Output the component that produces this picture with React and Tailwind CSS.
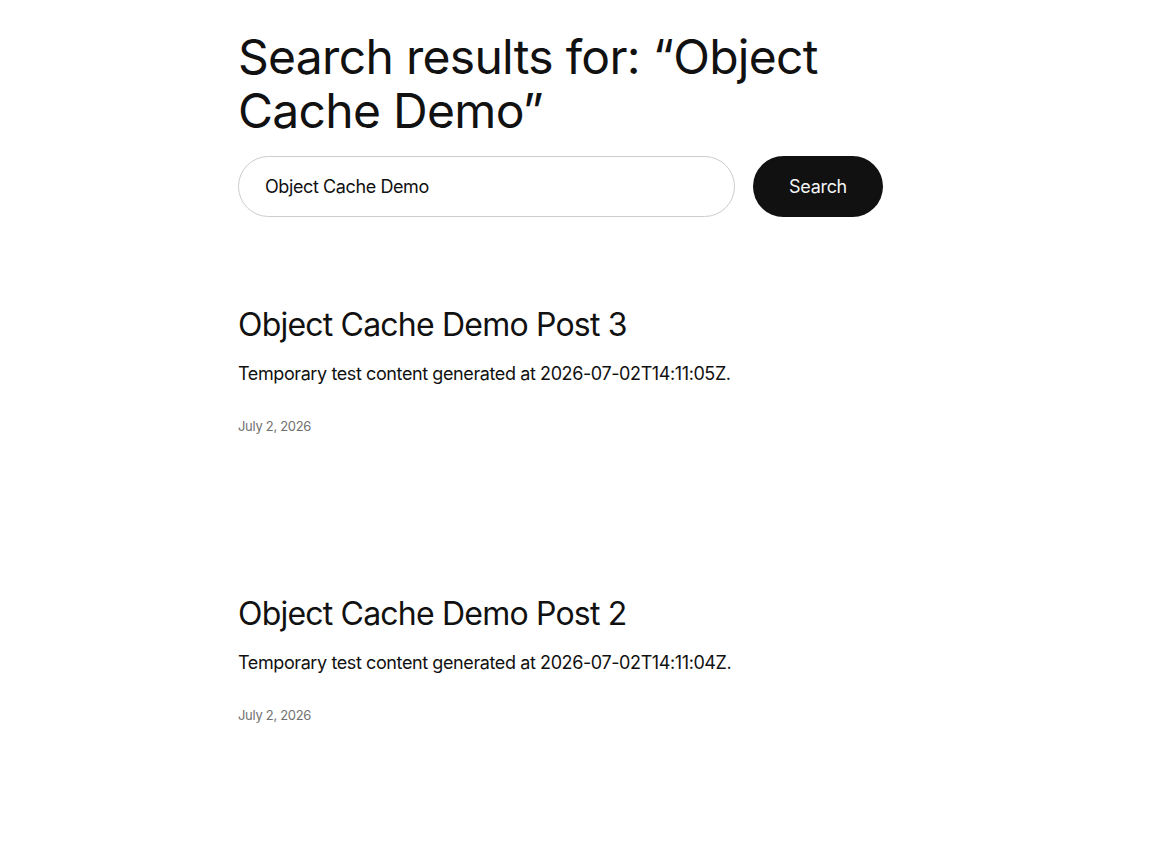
export default function App() {
  const posts = [
    { title: 'Object Cache Demo Post 3', stamp: '2026-07-02T14:11:05Z', date: 'July 2, 2026' },
    { title: 'Object Cache Demo Post 2', stamp: '2026-07-02T14:11:04Z', date: 'July 2, 2026' },
  ]

  return (
    <div className="min-h-screen bg-white text-[#111111]" style={{ fontFamily: 'Inter, "Noto Sans", sans-serif' }}>
      <main className="mx-auto w-[700px] pt-[30px]">
        <h1 className="text-[48px] leading-[54px] font-normal tracking-[-0.7px]">
          Search results for: “Object Cache Demo”
        </h1>

        <form className="mt-[18px] flex gap-[18px]" onSubmit={(e) => e.preventDefault()}>
          <input
            type="text"
            defaultValue="Object Cache Demo"
            className="h-[61px] w-[497px] rounded-full border border-[#cccccc] px-[26px] text-[18px] text-[#111111] outline-none tracking-[-0.4px]"
          />
          <button type="submit" className="h-[61px] w-[130px] rounded-full bg-[#111111] text-[18px] text-[#f5f5f5] tracking-[-0.3px]">
            Search
          </button>
        </form>

        <div className="mt-[88px] flex flex-col gap-[158px]">
          {posts.map((p) => (
            <article key={p.title}>
              <h2 className="text-[32px] leading-[40px] font-normal tracking-[-0.8px]">{p.title}</h2>
              <p className="mt-[15px] text-[18px] leading-[28px] tracking-[-0.4px]">
                Temporary test content generated at {p.stamp}.
              </p>
              <p className="mt-[28px] text-[13px] leading-[20px] text-[#707070] tracking-[-0.3px]">{p.date}</p>
            </article>
          ))}
        </div>
      </main>
    </div>
  )
}
